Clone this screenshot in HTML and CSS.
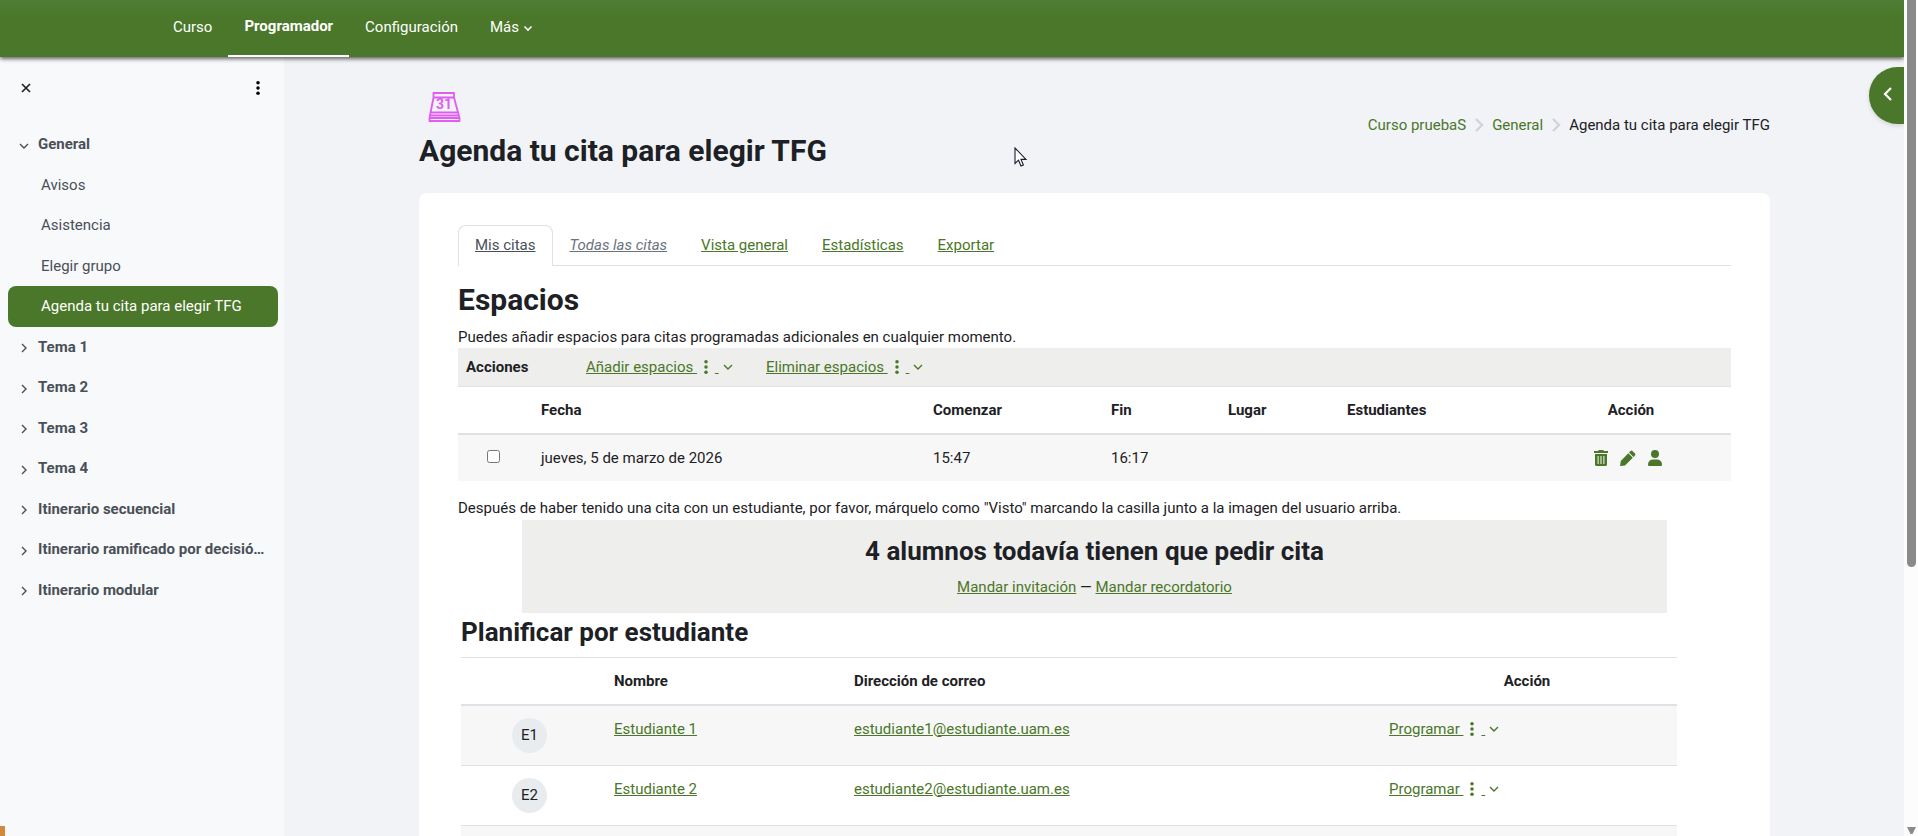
FILE: index.html
```html
<!DOCTYPE html>
<html lang="es">
<head>
<meta charset="utf-8">
<title>Agenda tu cita para elegir TFG</title>
<link rel="stylesheet" href="styles.css">
</head>
<body>
<svg class="sprite" aria-hidden="true">
  <symbol id="dots" viewBox="0 0 4 16"><circle cx="2" cy="2" r="2"/><circle cx="2" cy="8" r="2"/><circle cx="2" cy="14" r="2"/></symbol>
  <symbol id="down" viewBox="0 0 10 10"><path d="M1 3l4 4 4-4" fill="none" stroke="currentColor" stroke-width="1.4"/></symbol>
  <symbol id="right" viewBox="0 0 10 10"><path d="M3 1l4 4-4 4" fill="none" stroke="currentColor" stroke-width="1.4"/></symbol>
  <symbol id="crumb" viewBox="0 0 10 16"><path d="M2 2l6 6-6 6" fill="none" stroke="currentColor" stroke-width="2.4"/></symbol>
</svg>
<div class="page">
  <nav class="navbar">
    <a class="nav-item" href="#">Curso</a>
    <a class="nav-item active" href="#">Programador</a>
    <a class="nav-item" href="#">Configuración</a>
    <a class="nav-item" href="#">Más <svg class="nav-caret" viewBox="0 0 10 10"><path d="M1.500 3.500l3.500 3.500 3.500-3.500" fill="none" stroke="currentColor" stroke-width="1.600"/></svg></a>
  </nav>
  <div class="columns">
    <aside class="drawer">
      <div class="drawer-head">
        <button class="icon-button" aria-label="Cerrar"><svg width="10" height="10" viewBox="0 0 10 10"><path d="M1 1l8 8M9 1l-8 8" stroke="currentColor" stroke-width="1.700"/></svg></button>
        <button class="icon-button" aria-label="Opciones"><svg width="4" height="14"><use href="#dots"/></svg></button>
      </div>
      <ul class="index">
        <li><a class="section" href="#"><svg class="caret"><use href="#down"/></svg><span>General</span></a></li>
        <li><a class="item" href="#">Avisos</a></li>
        <li><a class="item" href="#">Asistencia</a></li>
        <li><a class="item" href="#">Elegir grupo</a></li>
        <li><a class="item current" href="#">Agenda tu cita para elegir TFG</a></li>
        <li><a class="section" href="#"><svg class="caret"><use href="#right"/></svg><span>Tema 1</span></a></li>
        <li><a class="section" href="#"><svg class="caret"><use href="#right"/></svg><span>Tema 2</span></a></li>
        <li><a class="section" href="#"><svg class="caret"><use href="#right"/></svg><span>Tema 3</span></a></li>
        <li><a class="section" href="#"><svg class="caret"><use href="#right"/></svg><span>Tema 4</span></a></li>
        <li><a class="section" href="#"><svg class="caret"><use href="#right"/></svg><span>Itinerario secuencial</span></a></li>
        <li><a class="section" href="#"><svg class="caret"><use href="#right"/></svg><span>Itinerario ramificado por decisió…</span></a></li>
        <li><a class="section" href="#"><svg class="caret"><use href="#right"/></svg><span>Itinerario modular</span></a></li>
      </ul>
    </aside>
    <main class="main">
      <header class="page-head">
        <div class="page-title">
          <svg class="activity-icon" viewBox="0 0 34 32" fill="none" stroke="#e05cf2" stroke-width="1.800" stroke-linejoin="round">
            <path d="M6.500 3h20.500v4.500H6.500zM6.500 7.500L2.500 28v3h30v-3L27 7.500M4 22.500h26.500M3 25.500h28M2.500 28h30"/>
            <text x="17" y="19" text-anchor="middle" class="icon-day">31</text>
          </svg>
          <h1>Agenda tu cita para elegir TFG</h1>
        </div>
        <nav class="breadcrumb">
          <a href="#">Curso pruebaS</a>
          <svg><use href="#crumb"/></svg>
          <a href="#">General</a>
          <svg><use href="#crumb"/></svg>
          <span>Agenda tu cita para elegir TFG</span>
        </nav>
      </header>
      <section class="card">
        <nav class="tabs">
          <a class="tab selected" href="#">Mis citas</a>
          <a class="tab muted" href="#">Todas las citas</a>
          <a class="tab" href="#">Vista general</a>
          <a class="tab" href="#">Estadísticas</a>
          <a class="tab" href="#">Exportar</a>
        </nav>
        <h2>Espacios</h2>
        <p>Puedes añadir espacios para citas programadas adicionales en cualquier momento.</p>
        <div class="commands">
          <strong>Acciones</strong>
          <a class="menu-link" href="#">Añadir espacios <svg class="dots"><use href="#dots"/></svg> <svg class="chev"><use href="#down"/></svg></a>
          <a class="menu-link" href="#">Eliminar espacios <svg class="dots"><use href="#dots"/></svg> <svg class="chev"><use href="#down"/></svg></a>
        </div>
        <table class="table slots">
          <thead>
            <tr><th class="pick"></th><th class="date">Fecha</th><th class="start">Comenzar</th><th class="end">Fin</th><th class="place">Lugar</th><th class="people">Estudiantes</th><th class="centered actions">Acción</th></tr>
          </thead>
          <tbody>
            <tr>
              <td class="centered"><input type="checkbox" aria-label="jueves, 5 de marzo de 2026"></td>
              <td>jueves, 5 de marzo de 2026</td><td>15:47</td><td>16:17</td><td></td><td></td>
              <td>
                <div class="row-actions">
                  <a href="#" aria-label="Borrar"><svg width="14" height="16" viewBox="0 0 14 16"><path fill="currentColor" fill-rule="evenodd" d="M0 1h4l1-1h4l1 1h4v2H0zM1 4h12v10.500q0 1.500-1.500 1.500h-9Q1 16 1 14.500zM3.600 6v8h1V6zM6.500 6v8h1V6zM9.400 6v8h1V6z"/></svg></a>
                  <a href="#" aria-label="Editar"><svg width="16" height="16" viewBox="0 0 16 16"><path fill="currentColor" d="M10.500.9q.9-.9 1.900 0L15 3.600q.9.900 0 1.900L13.500 7 9 2.500zM8.300 3.200l4.500 4.500-7.800 7.700L0 16l.8-5z"/></svg></a>
                  <a href="#" aria-label="Asignar"><svg width="14" height="16" viewBox="0 0 14 16"><circle cx="7" cy="4" r="4" fill="currentColor"/><path fill="currentColor" d="M0 15q0-5.500 5.500-5.500h3Q14 9.500 14 15q0 1-1 1H1q-1 0-1-1z"/></svg></a>
                </div>
              </td>
            </tr>
          </tbody>
        </table>
        <p class="note">Después de haber tenido una cita con un estudiante, por favor, márquelo como "Visto" marcando la casilla junto a la imagen del usuario arriba.</p>
        <div class="pending">
          <h3>4 alumnos todavía tienen que pedir cita</h3>
          <p><a href="#">Mandar invitación</a> — <a href="#">Mandar recordatorio</a></p>
        </div>
        <div class="schedule">
          <h3>Planificar por estudiante</h3>
          <table class="table students">
            <thead>
              <tr><th class="photo"></th><th class="name">Nombre</th><th class="mail">Dirección de correo</th><th class="centered">Acción</th></tr>
            </thead>
            <tbody>
              <tr>
                <td><span class="avatar">E1</span></td><td><a href="#">Estudiante 1</a></td><td><a href="#">estudiante1@estudiante.uam.es</a></td>
                <td><a class="menu-link" href="#">Programar <svg class="dots"><use href="#dots"/></svg> <svg class="chev"><use href="#down"/></svg></a></td>
              </tr>
              <tr>
                <td><span class="avatar">E2</span></td><td><a href="#">Estudiante 2</a></td><td><a href="#">estudiante2@estudiante.uam.es</a></td>
                <td><a class="menu-link" href="#">Programar <svg class="dots"><use href="#dots"/></svg> <svg class="chev"><use href="#down"/></svg></a></td>
              </tr>
              <tr><td></td><td></td><td></td><td></td></tr>
            </tbody>
          </table>
        </div>
      </section>
    </main>
  </div>
  <button class="drawer-toggle" aria-label="Abrir bloques"><svg width="9" height="14" viewBox="0 0 9 14"><path d="M8 1L2 7l6 6" fill="none" stroke="currentColor" stroke-width="2.200"/></svg></button>
  <div class="status-mark"></div>
  <svg class="pointer" viewBox="0 0 13 20"><path d="M1 1v15.500l3.500-3.300 2.500 5.800 2.400-1-2.400-5.600H12z" fill="#fff" stroke="#1a1a2a" stroke-width="1.100"/></svg>
</div>
<div class="scroll-track">
  <div class="scroll-thumb"></div>
  <svg class="scroll-arrow" viewBox="0 0 9 7"><path d="M0 0h9L5.500 7h-2z" fill="#8a8a8a"/></svg>
</div>
</body>
</html>
```

FILE: styles.css
```css
* { box-sizing: border-box; }

body {
  margin: 0;
  height: 100vh;
  display: flex;
  overflow: hidden;
  background: #f1f3f7;
  color: #1d2125;
  font: 15px/1.5 Roboto, "Liberation Sans", sans-serif;
}

a { color: #4a7729; }
h1, h2, h3, p, ul { margin: 0; padding: 0; }
h1, h2 { font-size: 30px; line-height: 36px; font-weight: 700; }
h3 { font-size: 26px; line-height: 32px; font-weight: 700; }
svg { flex: none; }
.sprite { position: absolute; width: 0; height: 0; }

.page {
  position: relative;
  flex: 1;
  min-width: 0;
  display: flex;
  flex-direction: column;
  overflow: hidden;
}

/* Top navigation */
.navbar {
  position: relative;
  z-index: 1;
  flex: none;
  display: flex;
  padding-left: 157px;
  height: 57px;
  background: linear-gradient(#507d35, #4a7729 18px);
  box-shadow: 0 2px 4px rgba(0, 0, 0, .6);
}
.nav-item {
  padding: 16px 16px 0;
  color: #fff;
  text-decoration: none;
}
.nav-item.active {
  padding-top: 15px;
  border-bottom: 2px solid #fff;
  font-weight: 700;
}
.nav-caret { width: 10px; height: 10px; vertical-align: -1px; }

/* Course index */
.columns { flex: 1; min-height: 0; display: flex; }
.drawer {
  flex: none;
  width: 284px;
  padding: 16px 6px 0 8px;
  background: #f8f9fb;
}
.drawer-head {
  display: flex;
  justify-content: space-between;
  padding: 0 10px 0 8px;
  height: 51px;
}
.icon-button {
  display: flex;
  align-items: center;
  justify-content: center;
  width: 20px;
  height: 30px;
  padding: 0;
  border: 0;
  background: none;
  color: #1d2125;
}
.index { list-style: none; }
.index a {
  display: flex;
  align-items: center;
  padding: 9px 0;
  border-radius: 8px;
  color: #495057;
  text-decoration: none;
  white-space: nowrap;
}
.index .section { padding-left: 11px; font-weight: 700; gap: 9px; }
.index .item { padding-left: 33px; }
.index .current { background: #4a7729; color: #fff; }
.caret { width: 10px; height: 10px; margin-top: 3px; }

/* Page heading */
.main { flex: 1; min-width: 0; padding: 33px 134px 0 135px; overflow: hidden; }
.page-head {
  display: flex;
  justify-content: space-between;
  align-items: flex-start;
  padding-bottom: 24px;
}
.activity-icon { display: block; width: 34px; height: 32px; margin: 0 8px 11px; }
.icon-day { font: 700 14px Roboto, sans-serif; fill: #e05cf2; stroke: none; }
.breadcrumb { display: flex; align-items: center; gap: 8px; padding-top: 24px; }
.breadcrumb a { text-decoration: none; }
.breadcrumb svg { width: 10px; height: 16px; color: #ced4da; }

.card { padding: 32px 39px; border-radius: 8px; background: #fff; }

.tabs { display: flex; border-bottom: 1px solid #dee2e6; margin-bottom: 16px; }
.tab {
  padding: 8px 16px;
  border: 1px solid transparent;
  border-bottom: 0;
  border-radius: 8px 8px 0 0;
}
.tab.selected {
  margin-bottom: -1px;
  border-color: #dee2e6;
  background: #fff;
  color: #495057;
}
.tab.muted { color: #6a737b; font-style: italic; }
.card > h2 { margin-bottom: 8px; }

.commands {
  display: grid;
  grid-template-columns: 120px 180px auto;
  justify-content: start;
  align-items: center;
  height: 38px;
  padding-left: 8px;
  background: #eeeeec;
}
.dots { width: 4px; height: 14px; margin: 0 7px; vertical-align: -2px; fill: currentColor; }
.chev { width: 10px; height: 10px; margin-left: 4px; }

/* Tables */
.table { width: 100%; border-spacing: 0; table-layout: fixed; }
.table th {
  padding: 12px 12px 11px;
  border-top: 1px solid #dee2e6;
  border-bottom: 2px solid #dee2e6;
  text-align: left;
  font-weight: 700;
}
.table td { padding: 12px; vertical-align: top; }
.table tbody tr:nth-child(odd) { background: #f7f7f7; }
.table .centered { text-align: center; }
.slots { margin-bottom: 16px; }
.slots input { width: 13px; height: 13px; margin: 0; }
.pick { width: 71px; }
.start { width: 178px; }
.end { width: 117px; }
.place { width: 119px; }
.people { width: 196px; }
.actions { width: 200px; }
.row-actions { display: flex; justify-content: center; align-items: center; gap: 12px; height: 22px; margin-right: 6px; }
.row-actions a, .row-actions svg { display: block; }

.pending {
  width: 90%;
  margin: 0 auto;
  padding: 15px 0;
  background: #eeeeec;
  text-align: center;
}
.pending h3 { margin-bottom: 9px; }

.schedule { padding: 3px 54px 0 3px; }
.schedule h3 { margin-bottom: 9px; }
.students tbody tr td { border-bottom: 1px solid #dee2e6; height: 60px; }
.photo { width: 141px; }
.name { width: 240px; }
.students th:last-child { width: 300px; }
.avatar {
  display: block;
  width: 35px;
  height: 35px;
  margin-left: 39px;
  border-radius: 50%;
  background: #e9ecef;
  text-align: center;
  line-height: 35px;
}

/* Elements over the page */
.drawer-toggle {
  position: absolute;
  top: 67px;
  right: 0;
  width: 35px;
  height: 57px;
  padding: 0 11px 3px 14px;
  border: 0;
  border-radius: 29px 0 0 29px;
  background: #4a7729;
  color: #fff;
  box-shadow: 0 2px 4px rgba(0, 0, 0, .12);
}
.drawer-toggle svg { display: block; }
.status-mark {
  position: absolute;
  left: 0;
  bottom: 0;
  width: 5px;
  height: 10px;
  background: #d28a3a;
}
.pointer { position: absolute; left: 1014px; top: 147px; width: 13px; height: 20px; }

.scroll-track {
  flex: none;
  display: flex;
  flex-direction: column;
  align-items: flex-end;
  justify-content: space-between;
  width: 14px;
  padding: 0 2px 2px 0;
  background: #fcfcfc;
}
.scroll-thumb { width: 9px; height: 68%; border-radius: 0 0 5px 5px; background: #8a8a8a; }
.scroll-arrow { width: 9px; height: 7px; }
```
